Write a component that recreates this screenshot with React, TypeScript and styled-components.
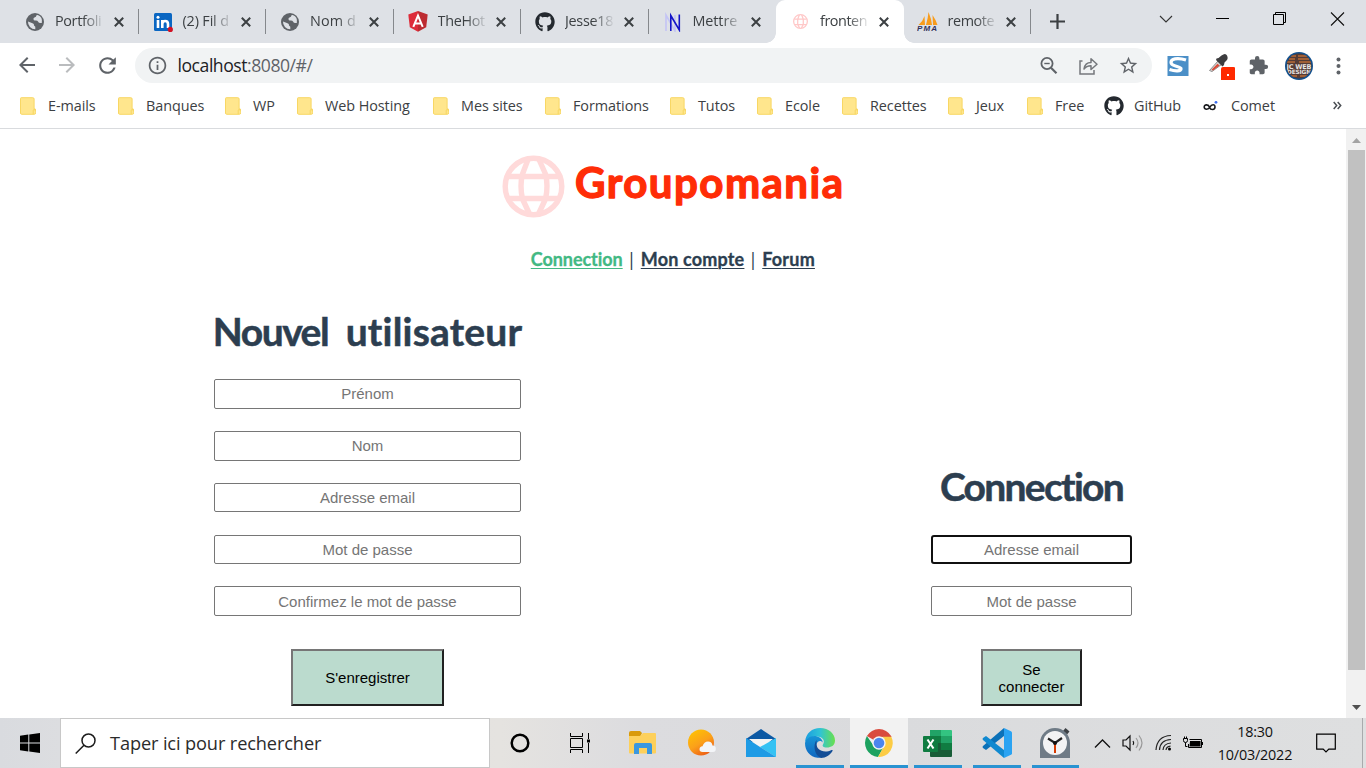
import React from 'react';
import styled, { createGlobalStyle } from 'styled-components';
import { FaGithub } from 'react-icons/fa';
import { MdExtension, MdStarBorder, MdInfoOutline, MdArrowBack, MdArrowForward, MdRefresh, MdPublic } from 'react-icons/md';

const Global = createGlobalStyle`
  * { box-sizing: border-box; }
  body { margin: 0; overflow: hidden; background: #fff; font-family: 'Open Sans', 'Noto Sans', sans-serif; font-variant-ligatures: none; }
`;

const Screen = styled.div`
  width: 1366px;
  height: 768px;
  display: flex;
  flex-direction: column;
  overflow: hidden;
`;

/* ---------- tab strip ---------- */
const TabStrip = styled.div`
  display: flex;
  height: 43px;
  flex: none;
  padding-left: 11px;
  background: #dee1e6;
`;
const Tab = styled.div<{ $active?: boolean }>`
  display: flex;
  align-items: center;
  position: relative;
  width: 127.5px;
  height: 43px;
  padding-left: 14px;
  flex: none;
  border-radius: 9px 9px 0 0;
  background: ${(p) => (p.$active ? '#fff' : 'transparent')};
  &::before, &::after {
    content: '';
    display: ${(p) => (p.$active ? 'block' : 'none')};
    position: absolute;
    bottom: 0;
    width: 10px;
    height: 10px;
  }
  &::before { left: -10px; background: radial-gradient(circle at 0 0, transparent 9.5px, #fff 10px); }
  &::after { right: -10px; background: radial-gradient(circle at 100% 0, transparent 9.5px, #fff 10px); }
`;
const Favicon = styled.span`
  display: flex;
  width: 20px;
  height: 22px;
  margin-right: 10px;
  align-items: center;
  justify-content: center;
  svg { display: block; flex: none; }
`;
const TabTitle = styled.span<{ $ls?: number }>`
  width: 48px;
  height: 22px;
  margin-right: 10.5px;
  white-space: nowrap;
  font-size: 14.4px;
  line-height: 20px;
  letter-spacing: ${(p) => p.$ls ?? -0.3}px;
  color: #3c4043;
  mask-image: linear-gradient(90deg, #000 58%, rgba(0, 0, 0, 0.1) 100%);
`;
const TabLine = styled.i`
  width: 1px;
  height: 25px;
  margin-left: 14px;
  background: #85888c;
`;
const Spacer = styled.span`
  flex: 1;
`;
const WindowButtons = styled.div`
  display: flex;
  align-items: center;
  height: 37px;
  gap: 43px;
  padding-right: 21px;
  svg { display: block; }
`;
const NewTab = styled.span`
  display: flex;
  align-items: center;
  margin-left: 19px;
`;

/* ---------- toolbar ---------- */
const Toolbar = styled.div`
  display: flex;
  align-items: center;
  height: 45px;
  flex: none;
  padding: 0 20px 0 15px;
  color: #5f6368;
  svg { display: block; flex: none; }
`;
const NavIcons = styled.div`
  display: flex;
  gap: 16px;
  width: 120px;
  padding-bottom: 1px;
`;
const Omnibox = styled.div`
  display: flex;
  align-items: center;
  width: 1017px;
  height: 35px;
  padding: 0 13px 0 12px;
  border-radius: 18px;
  background: #f1f3f4;
`;
const Url = styled.span`
  flex: 1;
  margin-left: 9.5px;
  padding-bottom: 1px;
  font-size: 17.6px;
  line-height: 24px;
  letter-spacing: -0.46px;
  color: #5f6368;
  b { font-weight: 400; color: #202124; }
`;
const OmniIcons = styled.div`
  display: flex;
  align-items: center;
  gap: 19px;
`;
const Extensions = styled.div`
  display: flex;
  align-items: center;
  flex: 1;
  margin-left: 15px;
`;
const Ext = styled.span<{ $w: number }>`
  width: ${(p) => p.$w}px;
  display: flex;
  flex: none;
`;

/* ---------- bookmarks ---------- */
const Bookmarks = styled.div`
  display: flex;
  align-items: center;
  height: 41px;
  flex: none;
  padding: 0 24px 5px 20px;
  border-bottom: 1px solid #d9dbde;
`;
const Bookmark = styled.span<{ $w: number; $icon: number }>`
  display: flex;
  align-items: center;
  width: ${(p) => p.$w}px;
  flex: none;
  white-space: nowrap;
  font-size: 14.4px;
  line-height: 20px;
  letter-spacing: -0.06px;
  color: #3c4043;
  & > i { display: flex; width: ${(p) => p.$icon}px; flex: none; }
  svg { display: block; }
`;

/* ---------- page ---------- */
const Viewport = styled.div`
  display: flex;
  flex: 1;
  min-height: 0;
`;
const Page = styled.main`
  display: flex;
  flex-direction: column;
  align-items: center;
  width: 1346px;
  padding-top: 21px;
  background: #fff;
  color: #2c3e50;
`;
const Nav = styled.nav`
  display: flex;
  align-items: center;
  justify-content: center;
  gap: 7px;
  height: 26px;
  margin-top: 24px;
`;
const NavBar = styled.span`
  display: flex;
  justify-content: center;
  width: 4.5px;
  font: 400 18px/24px 'Open Sans', sans-serif;
`;
const NavLink = styled.a<{ $active?: boolean; $w: number; $ls: number }>`
  width: ${(p) => p.$w}px;
  white-space: nowrap;
  font: 700 18px/26px 'Comic Sans MS', Lato, sans-serif;
  -webkit-text-stroke: 0.3px currentColor;
  letter-spacing: ${(p) => p.$ls}px;
  text-decoration: underline;
  text-decoration-thickness: 1px;
  text-underline-offset: 2px;
  color: ${(p) => (p.$active ? '#42b983' : '#2c3e50')};
`;
const Forms = styled.div`
  display: flex;
  justify-content: space-between;
  align-items: flex-end;
  width: 918px;
  margin-top: 33px;
`;
const Form = styled.form<{ $w: number }>`
  display: flex;
  flex-direction: column;
  align-items: center;
  width: ${(p) => p.$w}px;
`;
const Title = styled.h1`
  height: 52px;
  margin: 0 0 22.2px;
  white-space: nowrap;
  font: 700 39px/53px 'Comic Sans MS', Lato, sans-serif;
  font-variant-ligatures: none;
  -webkit-text-stroke: 0.5px currentColor;
  word-spacing: 8px;
`;
const Word = styled.span<{ $ls: number }>`
  letter-spacing: ${(p) => p.$ls}px;
`;
const Fields = styled.div`
  display: flex;
  flex-direction: column;
  gap: 22.2px;
  width: 100%;
`;
const Input = styled.input<{ $focus?: boolean }>`
  width: 100%;
  height: 29.6px;
  padding: 1px 2px;
  border: ${(p) => (p.$focus ? '2px solid #101010' : '1px solid #767676')};
  border-radius: ${(p) => (p.$focus ? 3 : 2)}px;
  outline: none;
  text-align: center;
  font: 15px 'Liberation Sans', Arial, sans-serif;
  &::placeholder { color: #757575; }
`;
const Submit = styled.button<{ $w: number }>`
  width: ${(p) => p.$w}px;
  height: 57px;
  margin-top: 33px;
  padding: 1px 10px 0;
  border: 2px solid;
  border-color: #767676 #212121 #212121 #767676;
  background: #bbdbce;
  color: #000;
  font: 15px/17px 'Liberation Sans', Arial, sans-serif;
`;
const Scrollbar = styled.div`
  display: flex;
  flex-direction: column;
  align-items: center;
  width: 20px;
  padding-top: 9px;
  background: #f1f1f1;
  svg { display: block; flex: none; }
`;
const Thumb = styled.div`
  flex: none;
  width: 17px;
  height: 520px;
  margin: 7px 0 35px;
  background: #c1c1c1;
`;

/* ---------- taskbar ---------- */
const Taskbar = styled.footer`
  display: flex;
  height: 50px;
  flex: none;
  background: linear-gradient(90deg, #d9dbdf 0, #dcdde0 60px, #e5e3e0 500px, #dcdcdf 640px, #dadbdd 900px, #dedfe0 1366px);
  svg { display: block; flex: none; }
`;
const Start = styled.div`
  display: flex;
  align-items: center;
  width: 60px;
  padding-left: 20px;
`;
const Search = styled.div`
  display: flex;
  align-items: center;
  width: 430px;
  padding-left: 14px;
  border: 1px solid #c8c8c8;
  background: #fff;
  color: #2b2b2b;
  font-size: 18.2px;
  letter-spacing: -0.12px;
  span { margin-left: 14px; }
`;
const Apps = styled.div`
  display: flex;
  gap: 1px;
  margin-left: 1px;
`;
const AppButton = styled.div<{ $line?: number; $active?: boolean; $gap?: number }>`
  display: flex;
  flex-direction: column;
  align-items: center;
  width: 58px;
  height: 50px;
  margin-left: ${(p) => p.$gap ?? 0}px;
  background: ${(p) => (p.$active ? '#f2f2f2' : 'transparent')};
  & > span { display: flex; flex: none; height: 47px; align-items: center; padding-top: 3px; }
  &::after { content: ''; width: ${(p) => p.$line ?? 0}px; height: 3px; background: #2a93d1; }
`;
const Tray = styled.div`
  display: flex;
  align-items: center;
  flex: 1;
  margin-left: 8px;
`;
const Clock = styled.div`
  width: 88px;
  margin: 0 17px 0 8px;
  text-align: center;
  font-size: 14.4px;
  line-height: 23px;
  letter-spacing: -0.2px;
  white-space: nowrap;
  color: #111;
  padding-bottom: 1px;
`;
const DesktopEdge = styled.i`
  width: 1px;
  height: 50px;
  margin-left: 26px;
  background: #a9aaac;
`;

/* ---------- drawings ---------- */
const Close = () => (
  <svg width="10" height="10" viewBox="0 0 10 10"><path d="M.8.8l8.4 8.4M9.2.8L.8 9.2" stroke="#3c4043" strokeWidth="2" /></svg>
);
const EarthIcon = () => (
  <svg width="18" height="18" viewBox="0 0 18 18">
    <circle cx="9" cy="9" r="9" fill="#5f6368" />
    <path d="M2 8.500l4.500 1.700q1.800.6 1.500 2.300l1.300 1.300v2.400A7.200 7.200 0 0 1 2 8.500zM10.500 2.200q-.2 2-2 2.300-1.200.4-1 1.700.2 1.500 1.700 1.300 2.200-.3 2.800 1 .6 1.600 2.800 1.500l1 .1q1.200-5.800-4-8z" fill="#dee1e6" />
  </svg>
);
const LinkedIn = () => (
  <svg width="20" height="20" viewBox="0 0 20 20">
    <rect x="1" y="1" width="18" height="18" rx="1.5" fill="#0a66c2" />
    <circle cx="5" cy="5.2" r="1.5" fill="#fff" />
    <path d="M5 8v8M9.3 16V8M9.3 12c0-4 5.7-4 5.7 0v4" stroke="#fff" strokeWidth="2.6" fill="none" />
    <circle cx="17.3" cy="17.4" r="2.6" fill="#d11124" />
  </svg>
);
const Angular = () => (
  <svg width="20" height="21" viewBox="0 0 20 21">
    <path d="M10 0L.3 3.5l1.5 12.8L10 20.8z" fill="#dd2c3a" />
    <path d="M10 0l9.7 3.5-1.5 12.8L10 20.8z" fill="#bd2b31" />
    <path d="M5.3 15.8L10 4.6l4.7 11.2M6.8 12.6h6.4" stroke="#fff" strokeWidth="2" fill="none" />
  </svg>
);
const NIcon = () => (
  <svg width="20" height="20" viewBox="0 0 20 20">
    <path d="M3 19V3l9 16V3" stroke="#c3c4f5" strokeWidth="1.6" fill="none" />
    <path d="M7.8 19V3.5l8.5 14.5V2.5" stroke="#1414c8" strokeWidth="1.6" fill="none" />
  </svg>
);
const Globe = ({ size, color }: { size: number; color: string }) => (
  <svg width={size} height={size} viewBox="0 0 62 62">
    <g fill="none" stroke={color} strokeWidth="5.2">
      <circle cx="31" cy="31" r="28.3" />
      <path d="M6 21.5h50M6 43.5h50M26 4.500L19.500 22v21L27 58M36 4.500L42.500 22v21L35 58" strokeLinejoin="round" />
    </g>
  </svg>
);
const Pma = () => (
  <svg width="21" height="20" viewBox="0 0 21 20">
    <path d="M1.500 13Q6 9 7.500 4l.5 9zM9 13Q11 6 11.500 0q3 7 3.500 13zM16 13l-.5-10Q19 8 20.500 13z" fill="#f89c1c" />
    <text x="0" y="19" fontFamily="Liberation Sans" fontWeight="700" fontStyle="italic" fontSize="8" textLength="20" fill="#33335a">PMA</text>
  </svg>
);
const Folder = () => (
  <svg width="16" height="18" viewBox="0 0 16 18">
    <path d="M1.2.7h11.600q1.300 0 1.300 1.300v9.800h.6q1 0 1 1.200v2.800q0 1.500-1.500 1.500H1.800Q.5 17.300.5 16V1.500q0-.8.7-.8z" fill="#ffe68d" stroke="#f8d764" />
    <path d="M13.200 17v-3.200q0-1.400 1-1.400t1 1.400" fill="none" stroke="#f5d257" strokeWidth=".8" />
  </svg>
);
const Comet = () => (
  <svg width="16" height="12" viewBox="0 0 16 12">
    <path d="M6.600 7.400C5.600 4.200 1.200 4 1.200 7s4.300 2.900 5.800 0 5-3.200 5 0-4.400 3.200-5.400.4z" fill="none" stroke="#17181c" strokeWidth="1.600" />
    <circle cx="13" cy="2.300" r="1.400" fill="#3c6df0" />
  </svg>
);
const Avatar = () => (
  <svg width="28" height="28" viewBox="0 0 28 28">
    <clipPath id="av"><circle cx="14" cy="14" r="12.400" /></clipPath>
    <circle cx="14" cy="14" r="14" fill="#11508e" />
    <g clipPath="url(#av)">
      <rect width="28" height="28" fill="#553c36" />
      <path d="M2 4h9m2 0h10M4 7h6m3 0h11M1 10h9m4 0h12M4 24h8m3 0h7" stroke="#b96b37" strokeWidth="1.300" />
      <text x="1.500" y="16.500" fontFamily="DejaVu Sans" fontWeight="700" fontSize="6.500" textLength="25" fill="#e8e5e3">JC WEB</text>
      <text x="2" y="22" fontFamily="DejaVu Sans" fontWeight="700" fontSize="5.800" textLength="24" fill="#e8e5e3">DESIGN</text>
    </g>
  </svg>
);
const Picker = () => (
  <svg width="27" height="28" viewBox="0 0 27 28">
    <g transform="translate(0 2)">
      <path d="M1.500 16.500L10 7l3.500 3.500L4 17.500z" fill="#d8d2d0" stroke="#8f8f8f" />
      <path d="M3.500 15.800l6-6 2 1.800-6.500 5z" fill="#dc4a38" />
      <path d="M8.500 4.500l2-.5 3-2.500q4-3 5.500 0t-.5 5l-2 2-.5 2.500-1.500 1.500-6.500-6.500z" fill="#3d3d3f" />
    </g>
    <rect x="13" y="15" width="14.500" height="15" rx="2" fill="#ff2a00" />
    <rect x="19" y="22" width="2" height="2" fill="#fff" />
  </svg>
);
const SIcon = () => (
  <svg width="22" height="22" viewBox="0 0 22 22">
    <rect x=".5" y="1" width="21" height="20" fill="#4b8fc7" />
    <path d="M19 5Q13 3 8 3.800q-4 .7-4 3.500 0 2.500 4.500 3.700t5.500 2.500q.5 2-3.500 2.300Q7 16 2.500 14.500" fill="none" stroke="#fff" strokeWidth="3.200" />
  </svg>
);
const Logo = () => (
  <svg width="346" height="72" viewBox="0 0 346 72">
    <g transform="translate(3 5)" fill="none" stroke="#ffdada" strokeWidth="5.400">
      <circle cx="30.500" cy="31.500" r="28.300" />
      <path d="M5 21.500h51M5 43.500h51M25 4.500L19.500 19q-3 12 0 25L26.500 59M36 4.500L42.500 19q3 12 0 25L35.500 59" strokeLinejoin="round" />
    </g>
    <text x="75" y="48" fontFamily="Lato, sans-serif" fontWeight="700" fontSize="42" textLength="268" lengthAdjust="spacing" fill="#ff2d07" stroke="#ff2d07" strokeWidth="1.300" strokeLinejoin="round">Groupomania</text>
  </svg>
);

const Explorer = () => (
  <svg width="28" height="26" viewBox="0 0 28 26">
    <path d="M1 3q0-2 2-2h9l2 2-2 4H1z" fill="#d99a0b" />
    <path d="M1 6h11l3-3h12q1 0 1 1v18.500q0 1-1 1H2q-1 0-1-1z" fill="#fdd05b" />
    <path d="M6 24V15q0-2 2-2h14q2 0 2 2v9h-5v-6h-8v6z" fill="#3a98e0" />
  </svg>
);
const Weather = () => (
  <svg width="28" height="28" viewBox="0 0 28 28">
    <linearGradient id="sun" x2=".6" y2="1"><stop stopColor="#ffc800" /><stop offset=".6" stopColor="#fba01a" /><stop offset="1" stopColor="#ee6216" /></linearGradient>
    <circle cx="13" cy="13.500" r="13" fill="url(#sun)" />
    <path d="M14.500 23q-3 0-3-2.700t3-3Q16 12.500 20 12.500t4.500 4q3.300 0 3.300 3.200T25 23z" fill="#f3f5f8" />
  </svg>
);
const Mail = () => (
  <svg width="30" height="30" viewBox="0 0 30 30">
    <path d="M0 11L15 1l15 10v3H0z" fill="#0c59a4" />
    <path d="M3 11h24L15 21z" fill="#f4f4f4" />
    <path d="M30 10v19L14 19z" fill="#35c2f3" />
    <path d="M0 10l30 19H0z" fill="#1e9be5" />
  </svg>
);
const Edge = () => (
  <svg width="30" height="30" viewBox="0 0 30 30">
    <linearGradient id="e1"><stop stopColor="#1b9de0" /><stop offset=".5" stopColor="#2fc3d6" /><stop offset="1" stopColor="#69e04c" /></linearGradient>
    <linearGradient id="e2" y2="1" x2="0"><stop stopColor="#1794d6" /><stop offset="1" stopColor="#0f66c0" /></linearGradient>
    <path d="M0 14C1 5 7 0 15 0c9 0 15 6 15 12.500 0 5-4 7-8 7-4 0-5-1.500-4-3 3-5-2-8-6-8Q4 8.500 0 14z" fill="url(#e1)" />
    <path d="M0 15C1 10 7 7 12 8.500c4 1 6 4 5.500 6-2-3-5.500-1-6 2-1 6 4 10 9 10-3 3-6 3.500-8 3.300C5 29 0 23 0 15z" fill="url(#e2)" />
    <path d="M11.500 12C8 17 9 27 16 30c5 0 9-3 11.500-7 .5-1-.3-1.300-1-1-8 4-16-.5-15-7.500z" fill="#124d96" />
  </svg>
);
const Chrome = () => (
  <svg width="28" height="28" viewBox="0 0 28 28">
    <path d="M14 14L1.900 7A14 14 0 0 1 26.100 7L26.500 8H14z" fill="#d94c3f" />
    <path d="M1.900 7A14 14 0 0 0 13 28l6.200-11L14 14l-5.200 3z" fill="#1da260" />
    <path d="M26.300 7.800A14 14 0 0 1 13 28l6.200-11q2.500-5-1.700-9.200z" fill="#fccc45" />
    <circle cx="14" cy="14" r="6.700" fill="#f3f3f3" />
    <circle cx="14" cy="14" r="5.300" fill="#4b86ee" />
  </svg>
);
const Excel = () => (
  <svg width="30" height="28" viewBox="0 0 30 28">
    <path d="M7 1h11v13H7z" fill="#21a366" /><path d="M18 1h10q1 0 1 1v5H18z" fill="#33c481" />
    <path d="M18 7h11v7H18z" fill="#21a366" /><path d="M7 7h11v7H7z" fill="#107c41" />
    <path d="M7 14h22v13q0 1-1 1H8q-1 0-1-1z" fill="#185c37" /><path d="M18 14h11v7H18z" fill="#107c41" />
    <rect y="7" width="15" height="16" rx="1" fill="#107c41" />
    <path d="M4.500 10.500l6 9m0-9l-6 9" stroke="#fff" strokeWidth="2.100" />
  </svg>
);
const VsCode = () => (
  <svg width="30" height="30" viewBox="0 0 30 30">
    <path d="M22 0v8L4 22l-3-2q-1-1 0-2z" fill="#0b71b8" />
    <path d="M22 30v-8L4 8l-3 2q-1 1 0 2z" fill="#1089d0" />
    <path d="M22 0l7 3.200q1 .5 1 1.500v20.600q0 1-1 1.500L22 30z" fill="#2aa3f2" />
  </svg>
);
const Timer = () => (
  <svg width="30" height="30" viewBox="0 0 30 30">
    <path d="M23 3l2.500-3 4 3.500-2.500 3z" fill="#3d4145" />
    <path d="M0 30V15a15 15 0 0 1 30 0v15z" fill="#6f7b86" />
    <circle cx="15" cy="15" r="12" fill="#f3f3f4" />
    <path d="M15 15v10" stroke="#d83b01" strokeWidth="2" />
    <path d="M8 10.500l7 4.500 7-5" stroke="#222" strokeWidth="2.200" fill="none" />
    <circle cx="15" cy="15" r="2" fill="#111" />
  </svg>
);

const tabs: { title: string; icon: React.ReactNode; active?: boolean; line?: boolean; ls?: number }[] = [
  { title: 'Portfoli', icon: <EarthIcon />, line: true, ls: -0.35 },
  { title: '(2) Fil d', icon: <LinkedIn />, line: true, ls: -0.15 },
  { title: 'Nom d', icon: <EarthIcon />, line: true, ls: 0.1 },
  { title: 'TheHot', icon: <Angular />, line: true, ls: -0.3 },
  { title: 'Jesse18', icon: <FaGithub size={20} color="#24292f" />, line: true, ls: -0.3 },
  { title: 'Mettre', icon: <NIcon />, ls: -0.1 },
  { title: 'fronten', icon: <Globe size={15} color="#ffc8c8" />, active: true, ls: -0.45 },
  { title: 'remote', icon: <Pma />, line: true, ls: -0.4 },
];

const bookmarks: [string, number, number][] = [
  ['E-mails', 98, 28], ['Banques', 107, 28], ['WP', 72, 28], ['Web Hosting', 136, 28], ['Mes sites', 112, 28],
  ['Formations', 125, 28], ['Tutos', 87, 28], ['Ecole', 85, 28], ['Recettes', 106, 28], ['Jeux', 79, 28], ['Free', 77, 28],
];

export default function App() {
  return (
    <Screen>
      <Global />
      <TabStrip>
        {tabs.map((t) => (
          <Tab key={t.title} $active={t.active}>
            <Favicon>{t.icon}</Favicon>
            <TabTitle $ls={t.ls}>{t.title}</TabTitle>
            <Close />
            {t.line && <TabLine />}
          </Tab>
        ))}
        <NewTab>
          <svg width="15" height="15" viewBox="0 0 15 15"><path d="M7.500 0v15M0 7.500h15" stroke="#3c4043" strokeWidth="2.200" /></svg>
        </NewTab>
        <Spacer />
        <WindowButtons>
          <svg width="14" height="8" viewBox="0 0 14 8"><path d="M1 1l6 6 6-6" fill="none" stroke="#333" strokeWidth="1.100" /></svg>
          <svg width="14" height="2" viewBox="0 0 14 2"><path d="M0 .5h13" stroke="#000" /></svg>
          <svg width="14" height="14" viewBox="0 0 14 14"><path d="M.5 2.500h10v10H.5zM2.500 2.500v-2h10v10h-2" fill="none" stroke="#000" /></svg>
          <svg width="15" height="14" viewBox="0 0 15 14"><path d="M1 .5l13 13M14 .5l-13 13" stroke="#111" strokeWidth="1.100" /></svg>
        </WindowButtons>
      </TabStrip>

      <Toolbar>
        <NavIcons>
          <MdArrowBack size={24} />
          <MdArrowForward size={24} color="#babcbe" />
          <MdRefresh size={25} />
        </NavIcons>
        <Omnibox>
          <MdInfoOutline size={21} />
          <Url><b>localhost</b>:8080/#/</Url>
          <OmniIcons>
            <svg width="20" height="20" viewBox="0 0 20 20" fill="none" stroke="#5f6368">
              <circle cx="8" cy="7.500" r="5.600" strokeWidth="1.800" /><path d="M12 11.700l5.500 5.500" strokeWidth="2.200" /><path d="M5.300 7.500h5.400" strokeWidth="1.400" />
            </svg>
            <svg width="21" height="20" viewBox="0 0 21 20" fill="none" stroke="#75787c" strokeWidth="1.500">
              <path d="M4.500 5H2v13h14v-4" /><path d="M6 13q1-6.500 7-6.500V2.800l6 5.400-6 5.300V9.800Q8.500 9.700 6 13z" strokeLinejoin="round" />
            </svg>
            <MdStarBorder size={21} />
          </OmniIcons>
        </Omnibox>
        <Extensions>
          <Ext $w={41}><SIcon /></Ext>
          <Ext $w={40}><Picker /></Ext>
          <Ext $w={37}><MdExtension size={21} /></Ext>
          <Ext $w={51}><Avatar /></Ext>
          <svg width="5" height="18" viewBox="0 0 5 18" fill="#5f6368"><circle cx="2.500" cy="2.500" r="2" /><circle cx="2.500" cy="9" r="2" /><circle cx="2.500" cy="15.500" r="2" /></svg>
        </Extensions>
      </Toolbar>

      <Bookmarks>
        {bookmarks.map(([label, w, icon]) => (
          <Bookmark key={label} $w={w} $icon={icon}><i><Folder /></i>{label}</Bookmark>
        ))}
        <Bookmark $w={99} $icon={30}><i><FaGithub size={20} color="#24292f" /></i>GitHub</Bookmark>
        <Bookmark $w={80} $icon={28}><i><Comet /></i>Comet</Bookmark>
        <Spacer />
        <svg width="9" height="9" viewBox="0 0 9 9"><path d="M.7 1l3 3.500-3 3.500M4.700 1l3 3.500-3 3.500" fill="none" stroke="#4b4f54" strokeWidth="1.500" /></svg>
      </Bookmarks>

      <Viewport>
        <Page>
          <Logo />
          <Nav>
            <NavLink $active $w={91.5} $ls={-0.05}>Connection</NavLink>
            <NavBar>|</NavBar>
            <NavLink $w={103} $ls={0.18}>Mon compte</NavLink>
            <NavBar>|</NavBar>
            <NavLink $w={53} $ls={0.2}>Forum</NavLink>
          </Nav>
          <Forms>
            <Form $w={307}>
              <Title><Word $ls={-1.5}>Nouvel</Word> <Word $ls={0.2}>utilisateur</Word></Title>
              <Fields>
                <Input placeholder="Prénom" />
                <Input placeholder="Nom" />
                <Input placeholder="Adresse email" />
                <Input placeholder="Mot de passe" />
                <Input placeholder="Confirmez le mot de passe" />
              </Fields>
              <Submit $w={153} type="button">S'enregistrer</Submit>
            </Form>
            <Form $w={201}>
              <Title><Word $ls={-1.7}>Connection</Word></Title>
              <Fields>
                <Input $focus placeholder="Adresse email" />
                <Input placeholder="Mot de passe" />
              </Fields>
              <Submit $w={101} type="button">Se connecter</Submit>
            </Form>
          </Forms>
        </Page>
        <Scrollbar>
          <svg width="9" height="5" viewBox="0 0 9 5"><path d="M0 5L4.500 0 9 5z" fill="#a3a3a3" /></svg>
          <Thumb />
          <svg width="9" height="5" viewBox="0 0 9 5"><path d="M0 0h9L4.500 5z" fill="#505050" /></svg>
        </Scrollbar>
      </Viewport>

      <Taskbar>
        <Start>
          <svg width="20" height="20" viewBox="0 0 20 20"><path d="M0 2.800L8.300 1.500v8H0zM9.300 1.400L20 0v9.500H9.300zM0 10.500h8.300v8L0 17.300zM9.300 10.500H20V20L9.300 18.600z" /></svg>
        </Start>
        <Search>
          <svg width="21" height="21" viewBox="0 0 21 21" fill="none" stroke="#1c1c1c" strokeWidth="1.500"><circle cx="13.500" cy="7.500" r="6.500" /><path d="M9 12.200L.7 20.500" /></svg>
          <span>Taper ici pour rechercher</span>
        </Search>
        <Apps>
          <AppButton><span><svg width="20" height="20"><circle cx="10" cy="10" r="8.300" fill="none" stroke="#000" strokeWidth="2.500" /></svg></span></AppButton>
          <AppButton><span>
            <svg width="21" height="20" viewBox="0 0 21 20" fill="none" stroke="#000">
              <path d="M1.500 0v3.500h12V0M1.500 20v-3.500h12V20M1.500 5.500h12v9h-12zM19.500 0v6M19.500 10v10" /><path d="M18 6.500h3v3h-3z" fill="#000" stroke="none" />
            </svg>
          </span></AppButton>
          <AppButton $gap={4}><span><Explorer /></span></AppButton>
          <AppButton $gap={1}><span><Weather /></span></AppButton>
          <AppButton><span><Mail /></span></AppButton>
          <AppButton $line={48}><span><Edge /></span></AppButton>
          <AppButton $line={58} $active><span><Chrome /></span></AppButton>
          <AppButton $line={48}><span><Excel /></span></AppButton>
          <AppButton $line={48}><span><VsCode /></span></AppButton>
          <AppButton $line={47} $gap={-1}><span><Timer /></span></AppButton>
        </Apps>
        <Tray>
          <svg width="30" height="20" viewBox="0 0 30 20"><path d="M3 14.500L10.500 7l7.500 7.500" fill="none" stroke="#111" strokeWidth="1.300" /></svg>
          <svg width="33" height="20" viewBox="0 0 33 20" fill="none" stroke="#111" strokeWidth="1.200">
            <path d="M1 7h3l4-4v14l-4-4H1zM11 8q1.500 2 0 4" /><path d="M14 5q4 5 0 10M17 2.500q6 7.500 0 15" stroke="#999" />
          </svg>
          <svg width="27" height="20" viewBox="0 0 27 20" fill="none" stroke="#222" strokeWidth="1.200">
            <path d="M1 17Q2 3 16 2.500M4.500 17Q5 7 16 6.500M8 17Q8.500 10.500 16 10M11 17q.5-3.500 4.500-3.800" /><circle cx="14.500" cy="16" r="1.500" fill="#000" stroke="none" />
          </svg>
          <svg width="21" height="18" viewBox="0 0 21 18">
            <path d="M1.500 4.500h4v2q0 2-2 2t-2-2zM2.500 2.500v2M4.500 2.500v2M3.500 8.500v4h2" fill="none" stroke="#000" />
            <path d="M7.500 5.500h12v8h-13V10M20.500 8v3" fill="none" stroke="#000" />
            <path d="M8 7h10.500v5.500h-11z" />
          </svg>
          <Clock>18:30<br />10/03/2022</Clock>
          <svg width="20" height="20" viewBox="0 0 20 20"><path d="M.7 1.200h18.600v15h-6.500L10 19l-2.800-2.800H.7z" fill="none" stroke="#000" strokeWidth="1.200" /></svg>
          <DesktopEdge />
        </Tray>
      </Taskbar>
    </Screen>
  );
}
